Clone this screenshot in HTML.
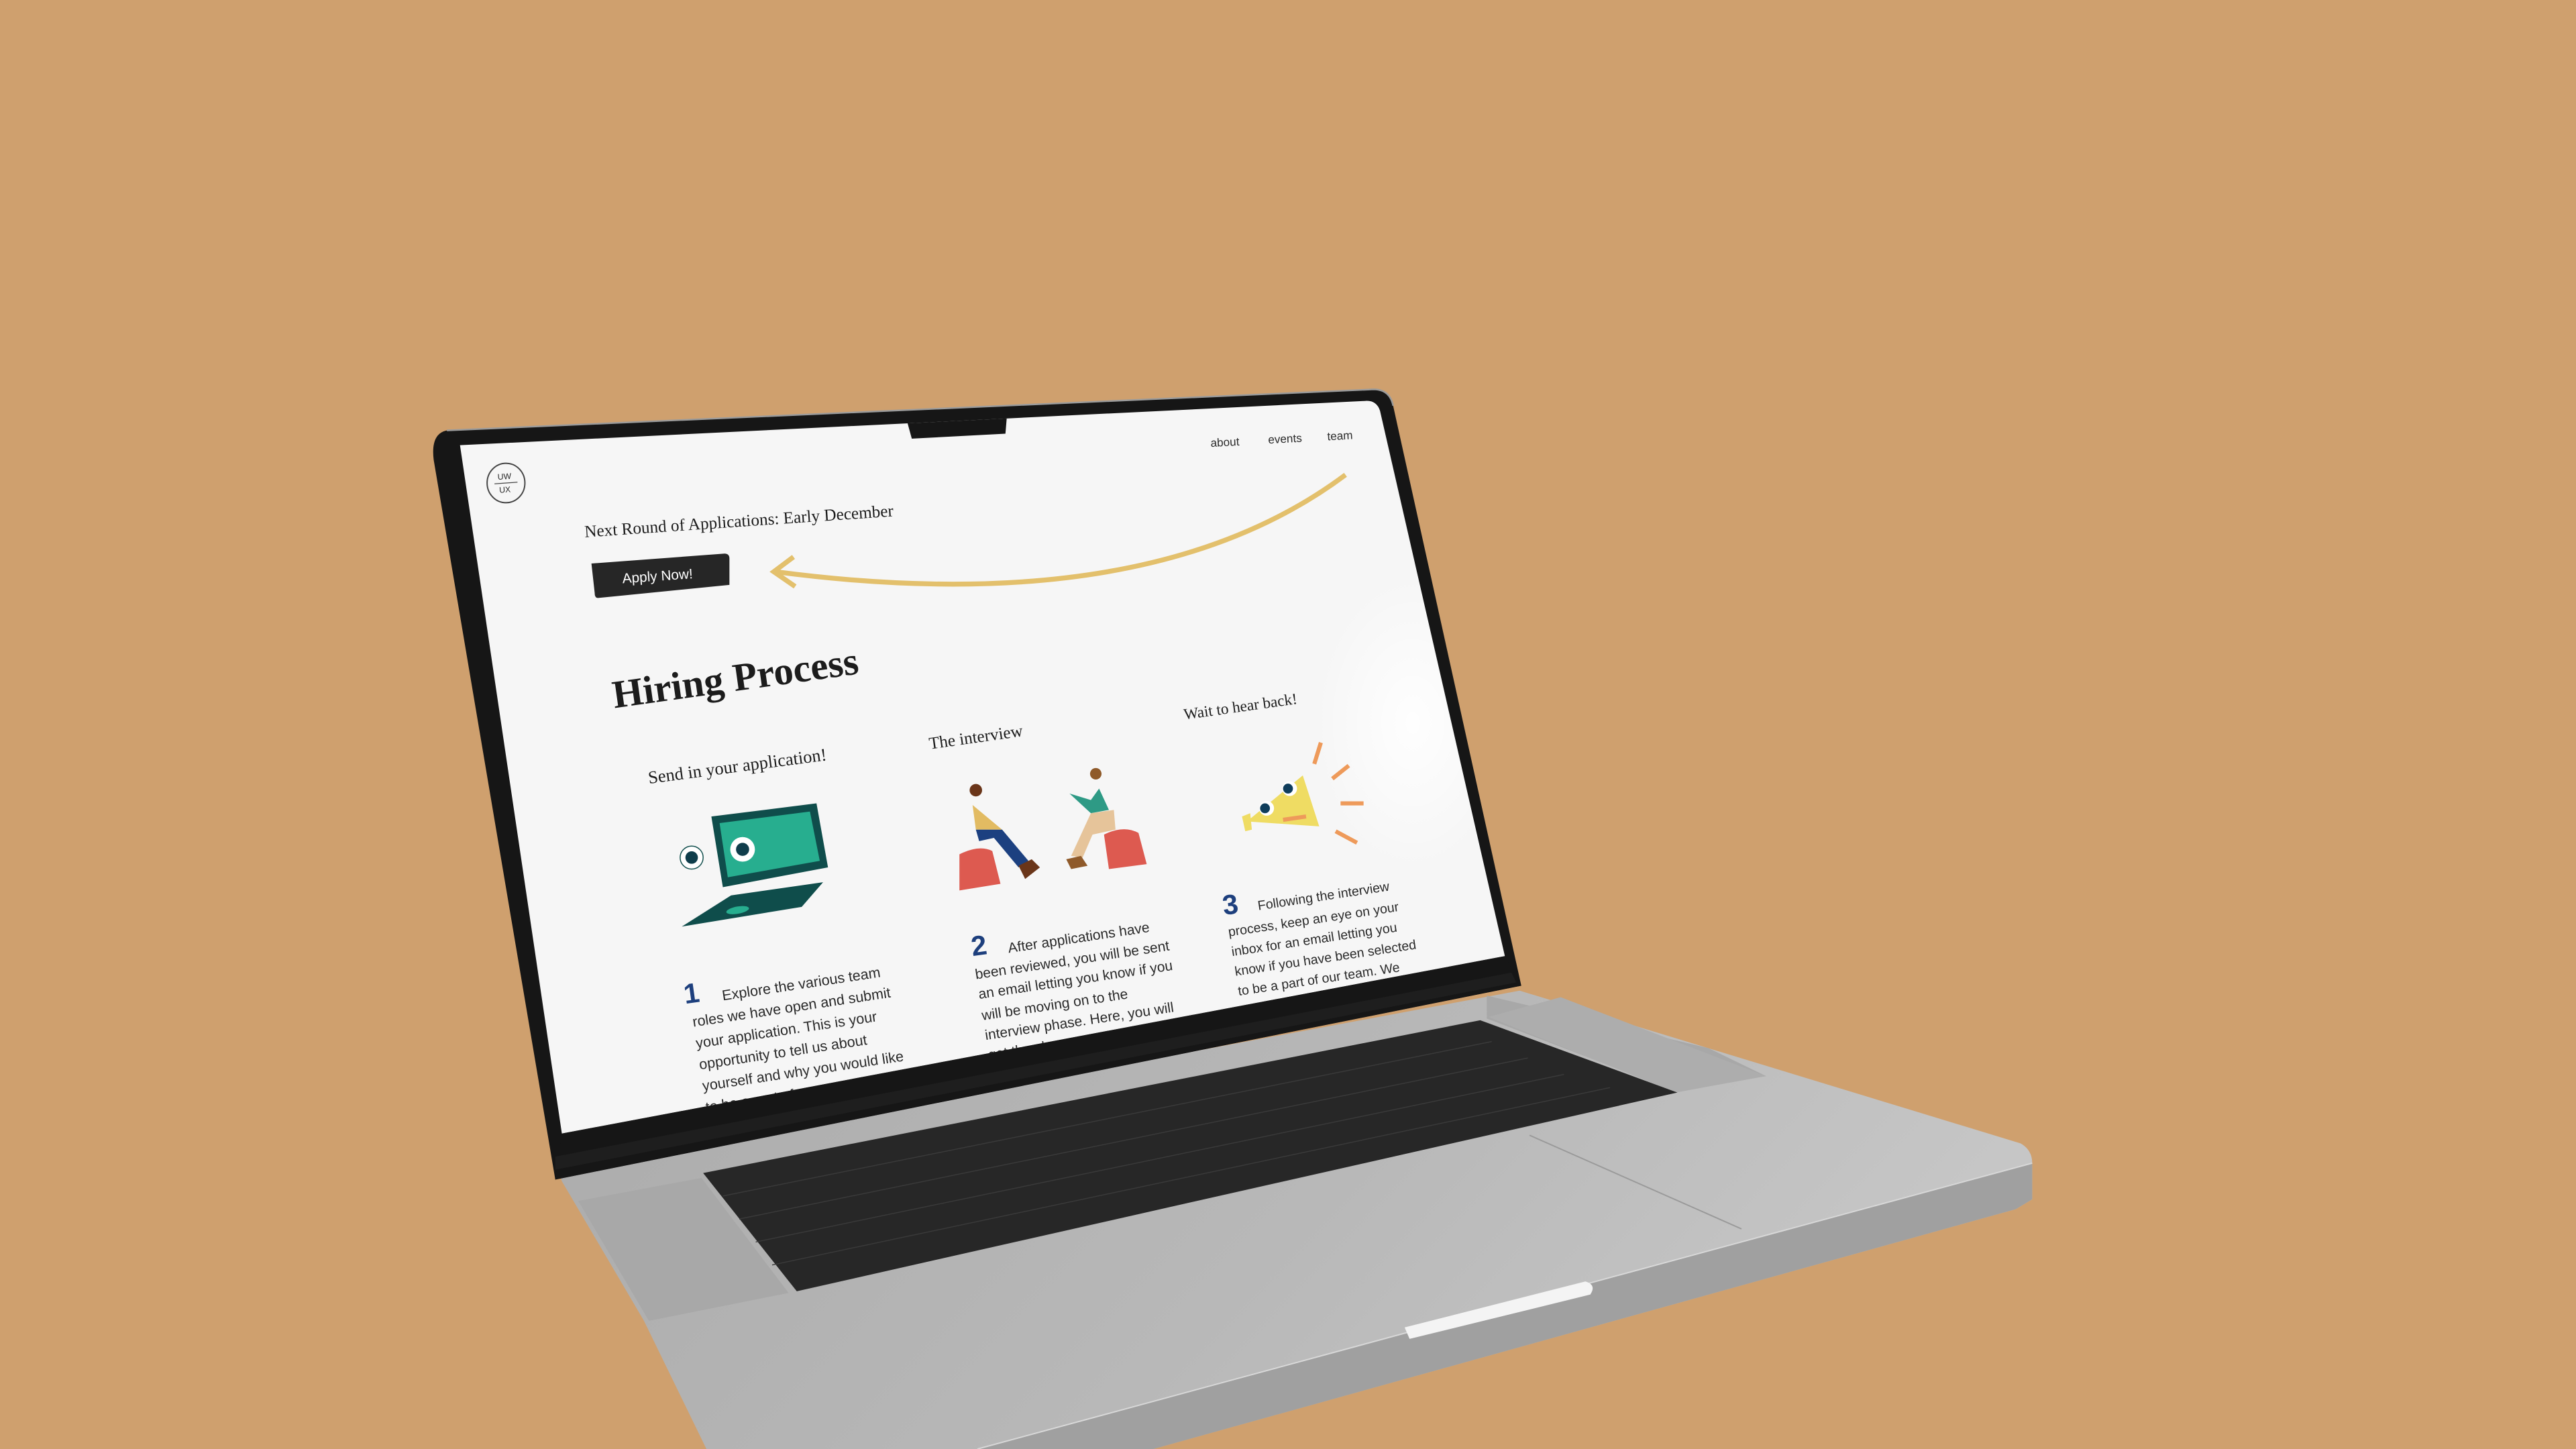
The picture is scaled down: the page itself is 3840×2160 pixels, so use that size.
<!DOCTYPE html>
<html><head><meta charset="utf-8"><style>
html,body{margin:0;padding:0;background:#cfa06e;}
svg{display:block}
.serif{font-family:"Liberation Serif",serif;fill:#1c1c1c}
.sans{font-family:"Liberation Sans",sans-serif;fill:#2a2a2a}
.num{font-family:"Liberation Sans",sans-serif;fill:#1d3f7d;font-weight:bold}
</style></head><body>
<svg width="3840" height="2160" viewBox="0 0 1568 882" xmlns="http://www.w3.org/2000/svg">
<defs>
<clipPath id="scr"><path d="M280,271 L832,244 Q838,244 840,250 L916,582 L342,690 Z"/></clipPath>
<linearGradient id="baseg" x1="0" y1="0" x2="1" y2="0.3">
<stop offset="0" stop-color="#ababab"/><stop offset="0.6" stop-color="#b8b8b8"/><stop offset="1" stop-color="#c6c6c6"/></linearGradient>
<radialGradient id="glare" cx="0.5" cy="0.5" r="0.5"><stop offset="0" stop-color="#fff" stop-opacity="0.9"/><stop offset="1" stop-color="#fff" stop-opacity="0"/></radialGradient>
</defs>
<rect width="1568" height="882" fill="#cfa06e"/>
<!-- base -->
<path d="M340,712 L925,603 L1230,696 Q1237,700 1237,708 L1237,730 L1227,736 L702,882 L430,882 L392,804 L342,719 Z" fill="url(#baseg)"/>
<path d="M1237,708 L1237,730 L1227,736 L702,882 L595,882 Z" fill="#a0a0a0"/>
<path d="M1237,708 L595,882" stroke="#d8d8d8" stroke-width="0.8"/>
<!-- hinge -->
<path d="M905,606 L1040,638 L1075,655 L1020,664 L905,620 Z" fill="#a8a8a8"/>
<!-- speakers -->
<path d="M352,731 L427,717 L480,787 L395,804 Z" fill="#a8a8a8"/>
<path d="M906,619 L950,607 L1075,655 L1020,665 Z" fill="#adadad"/>
<!-- keyboard -->
<path d="M428,714 L901,621 L1021,665 L485,786 Z" fill="#272727"/>
<g stroke="#3a3a3a" stroke-width="0.6" fill="none">
<path d="M440,728 L908,634"/><path d="M450,742 L930,644"/><path d="M460,756 L952,654"/><path d="M470,770 L980,662"/>
</g>
<!-- trackpad -->
<path d="M931,691 L1060,748" stroke="#9a9a9a" stroke-width="0.8" fill="none"/>
<!-- light bar -->
<path d="M855,808 L965,780 Q972,782 968,788 L858,815 Z" fill="#f4f4f4"/>
<!-- lid -->
<path d="M272,262 L836,237 Q846,237 848,247 L926,600 L338,718 L264,280 Q262,264 272,262 Z" fill="#161616"/>
<path d="M272,262 L836,237 Q846,237 848,247" stroke="#9b9b9b" stroke-width="1" fill="none"/>
<!-- screen -->
<path d="M280,271 L832,244 Q838,244 840,250 L916,582 L342,690 Z" fill="#f6f6f6"/>
<g clip-path="url(#scr)">
<ellipse cx="860" cy="440" rx="60" ry="90" fill="url(#glare)"/>
<path d="M552,256 L613,252 L612,264 L555,267 Z" fill="#161616"/>
<text class="sans" font-size="7" transform="translate(737,272) rotate(-3)">about</text>
<text class="sans" font-size="7" transform="translate(772,270) rotate(-3)">events</text>
<text class="sans" font-size="7" transform="translate(808,268) rotate(-3)">team</text>
<ellipse cx="308" cy="294" rx="11.5" ry="12" fill="none" stroke="#444" stroke-width="0.8"/>
<text class="sans" font-size="5" transform="translate(303,292) rotate(-4)" fill="#444">UW</text>
<line x1="301" y1="294.5" x2="315" y2="293.5" stroke="#444" stroke-width="0.5"/>
<text class="sans" font-size="5" transform="translate(304,300) rotate(-4)" fill="#444">UX</text>
<text class="serif" font-size="10.3" transform="translate(356,327) rotate(-3.9)">Next Round of Applications: Early December</text>
<path d="M360,343 L441,337 Q444,337 444,340 L444,356 L364,364 Q362,364 362,361 Z" fill="#262626"/>
<text font-family="Liberation Sans,sans-serif" font-size="8.5" fill="#fff" transform="translate(379,355) rotate(-4)">Apply Now!</text>
<path d="M819,289 Q700,378 472,348" stroke="#e3c06c" stroke-width="3" fill="none"/>
<path d="M483,339 L471,348 L484,357" stroke="#e3c06c" stroke-width="3" fill="none"/>
<text class="serif" font-size="24" font-weight="bold" transform="translate(374,431) rotate(-8)">Hiring Process</text>
<text class="serif" font-size="10.8" transform="translate(395,477) rotate(-7.5)">Send in your application!</text>
<text class="serif" font-size="10.3" transform="translate(566,456) rotate(-8)">The interview</text>
<text class="serif" font-size="9.5" transform="translate(721,438) rotate(-8)">Wait to hear back!</text>
<!-- laptop icon -->
<path d="M433,497 L497,489 L504,528 L440,540 Z" fill="#0f4d4b"/>
<path d="M438,501 L493,494 L499,524 L443,534 Z" fill="#27ae8f"/>
<circle cx="452" cy="517" r="7.5" fill="#fff"/><circle cx="452" cy="517" r="4" fill="#0f3d4b"/>
<circle cx="421" cy="522" r="7" fill="#fff" stroke="#0f4d4b" stroke-width="0.6"/><circle cx="421" cy="522" r="3.8" fill="#0f3d4b"/>
<path d="M415,564 L445,545 L501,537 L488,552 Z" fill="#0f4d4b"/>
<ellipse cx="449" cy="554" rx="7" ry="2.2" fill="#27ae8f" transform="rotate(-10 449 554)"/>
<!-- interview figures -->
<path d="M584,520 Q596,514 604,518 L609,538 L584,542 Z" fill="#dd5a50"/>
<path d="M672,508 Q684,502 693,507 L698,526 L675,529 Z" fill="#dd5a50"/>
<circle cx="594" cy="481" r="3.8" fill="#6a3519"/>
<path d="M592,490 L594,505 L610,505 Z" fill="#e2bb62"/>
<path d="M594,505 L610,505 L626,524 L620,528 L605,510 L596,512 Z" fill="#1c4080"/>
<path d="M620,527 L628,523 L633,528 L624,535 Z" fill="#6a3519"/>
<circle cx="667" cy="471" r="3.5" fill="#8f5a2a"/>
<path d="M651,483 L664,487 L669,480 L675,493 L664,495 Z" fill="#2e9a85"/>
<path d="M664,495 L678,493 L679,505 L665,508 L659,522 L652,521 Z" fill="#e6c49a"/>
<path d="M649,523 L658,521 L662,527 L652,529 Z" fill="#8f5a2a"/>
<!-- megaphone -->
<path d="M759,500 L793,472 L803,503 Z" fill="#efdc63"/>
<path d="M756,497 L761,495 L762,505 L758,506 Z" fill="#efdc63"/>
<circle cx="785" cy="480" r="4.5" fill="#fff"/><circle cx="784" cy="480" r="3" fill="#0f3d5b"/>
<circle cx="771" cy="492" r="4.5" fill="#fff"/><circle cx="770" cy="492" r="3" fill="#0f3d5b"/>
<path d="M781,499 L795,497" stroke="#ee9a5a" stroke-width="2.5"/>
<g stroke="#ee9a5a" stroke-width="2.5"><path d="M804,452 L800,465"/><path d="M821,466 L811,474"/><path d="M816,489 L830,489"/><path d="M813,506 L826,513"/></g>
<!-- step texts -->
<text class="num" font-size="17" transform="translate(417,611) rotate(-8)">1</text>
<g class="sans" font-size="8.8">
<text transform="translate(440,609) rotate(-8.5)">Explore the various team</text>
<text transform="translate(422,625) rotate(-8.5)">roles we have open and submit</text>
<text transform="translate(424,638) rotate(-8.5)">your application. This is your</text>
<text transform="translate(426,651) rotate(-8.5)">opportunity to tell us about</text>
<text transform="translate(428,664) rotate(-8.5)">yourself and why you would like</text>
<text transform="translate(430,677) rotate(-8.5)">to be a part of our team. If you</text>
</g>
<text class="num" font-size="17" transform="translate(592,582) rotate(-8)">2</text>
<g class="sans" font-size="8.6">
<text transform="translate(614,580) rotate(-8.5)">After applications have</text>
<text transform="translate(594,596) rotate(-8.5)">been reviewed, you will be sent</text>
<text transform="translate(596,608) rotate(-8.5)">an email letting you know if you</text>
<text transform="translate(598,621) rotate(-8.5)">will be moving on to the</text>
<text transform="translate(600,633) rotate(-8.5)">interview phase. Here, you will</text>
<text transform="translate(602,645) rotate(-8.5)">get the chance to meet virtually</text>
</g>
<text class="num" font-size="17" transform="translate(745,557) rotate(-8)">3</text>
<g class="sans" font-size="8">
<text transform="translate(766,554) rotate(-8.5)">Following the interview</text>
<text transform="translate(748,570) rotate(-8.5)">process, keep an eye on your</text>
<text transform="translate(750,582) rotate(-8.5)">inbox for an email letting you</text>
<text transform="translate(752,594) rotate(-8.5)">know if you have been selected</text>
<text transform="translate(754,606) rotate(-8.5)">to be a part of our team. We</text>
<text transform="translate(756,618) rotate(-8.5)">look forward to seeing your</text>
</g>
</g>
<path d="M342,690 L916,582 L926,600 L338,718 Z" fill="#161616"/>
<path d="M338,704 L920,592 L923,598 L338,712 Z" fill="#1e1e1e"/>
</svg>
</body></html>
